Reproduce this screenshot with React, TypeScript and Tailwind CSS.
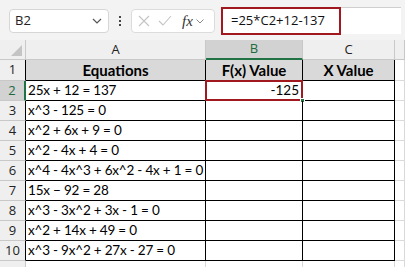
import React from "react";

const rows = [
  "25x + 12 = 137",
  "x^3 - 125 = 0",
  "x^2 + 6x + 9 = 0",
  "x^2 - 4x + 4 = 0",
  "x^4 - 4x^3 + 6x^2 - 4x + 1 = 0",
  "15x \u2212 92 = 28",
  "x^3 - 3x^2 + 3x - 1 = 0",
  "x^2 + 14x + 49 = 0",
  "x^3 - 9x^2 + 27x - 27 = 0",
];

const cellFont = { fontFamily: "Lato, 'Liberation Sans', sans-serif" };

export default function App() {
  return (
    <div className="w-[405px] h-[267px] overflow-hidden bg-white flex flex-col" style={{ fontFamily: "'Open Sans', 'Noto Sans', sans-serif" }}>
      {/* toolbar */}
      <div className="h-[40px] bg-[#f3f3f3] flex items-start pt-[9px] shrink-0">
        <div className="shrink-0 ml-[9px] w-[100px] h-[24px] rounded-[4px] border border-[#d6d6d6] bg-white flex items-center justify-between pl-[5px] pr-[6px]">
          <span className="text-[13px] text-[#222]">B2</span>
          <svg width="10" height="6" viewBox="0 0 10 6"><path d="M1 1 L5 5 L9 1" fill="none" stroke="#555" strokeWidth="1.2" /></svg>
        </div>
        <div className="shrink-0 w-[22px] h-[24px] flex flex-col items-center justify-center gap-[2px]">
          <div className="w-[2px] h-[2px] bg-[#444]" />
          <div className="w-[2px] h-[2px] bg-[#444]" />
          <div className="w-[2px] h-[2px] bg-[#444]" />
        </div>
        <div className="shrink-0 w-[84px] h-[24px] rounded-[4px] border border-[#dcdcdc] bg-white flex items-center pl-[6px] gap-[8px]">
          <svg width="12" height="12" viewBox="0 0 12 12" className="shrink-0"><path d="M1 1 L11 11 M11 1 L1 11" stroke="#c4c4c4" strokeWidth="1.1" /></svg>
          <svg width="14" height="12" viewBox="0 0 14 12" className="shrink-0"><path d="M1 6 L5 10 L13 1" fill="none" stroke="#c4c4c4" strokeWidth="1.1" /></svg>
          <span className="italic text-[15px] text-[#333] leading-none ml-[2px]" style={{ fontFamily: "'Liberation Serif', serif" }}>fx</span>
          <svg width="8" height="5" viewBox="0 0 8 5" className="-ml-[5px] shrink-0"><path d="M0.5 0.5 L4 4 L7.5 0.5" fill="none" stroke="#888" strokeWidth="1" /></svg>
        </div>
        <div className="shrink-0 ml-[6px] mt-[-2px] w-[180px] h-[27px] border-t border-l border-[#cfcfcf] bg-white flex items-stretch">
          <div className="shrink-0 w-[120px] -ml-[1px] -mt-[1px] h-[28px] border-2 border-[#a1191e] flex items-center pl-[8px] text-[13px] text-[#111] whitespace-nowrap">
            =25*C2+12-137
          </div>
        </div>
      </div>

      {/* sheet */}
      <div className="grid grid-cols-[26px_180px_97px_92px_10px] grid-rows-[20px_21px_repeat(10,20px)] text-[#000]">
        {/* column headers */}
        <div className="bg-[#efefef] border-r border-b border-[#c8c8c8] relative">
          <div className="absolute right-[3px] bottom-[3px] w-0 h-0 border-l-[11px] border-l-transparent border-b-[11px] border-b-[#c4c4c4]" />
        </div>
        <div className="bg-[#efefef] border-r border-b border-[#c8c8c8] flex items-center justify-center text-[13px] text-[#222]">A</div>
        <div className="bg-[#d2d2d2] border-r border-[#c8c8c8] border-b-2 border-b-[#217346] flex items-center justify-center text-[13px] text-[#1e6b40]">B</div>
        <div className="bg-[#efefef] border-r border-b border-[#c8c8c8] flex items-center justify-center text-[13px] text-[#222]">C</div>
        <div className="bg-[#efefef] border-r border-b border-[#c8c8c8]" />

        {/* row 1 */}
        <div className="bg-[#efefef] border-r border-r-[#000] border-b border-b-[#c8c8c8] flex items-center justify-center text-[13px] text-[#222]">1</div>
        <div className="bg-[#d9d9d9] border-r border-b border-black flex items-center justify-center text-[15px] font-bold" style={cellFont}>Equations</div>
        <div className="bg-[#d9d9d9] border-r border-b border-black flex items-center justify-center text-[15px] font-bold" style={cellFont}>F(x) Value</div>
        <div className="bg-[#d9d9d9] border-r border-b border-black flex items-center justify-center text-[15px] font-bold" style={cellFont}>X Value</div>
        <div className="border-r border-b border-[#d9d9d9]" />

        {rows.map((eq, i) => {
          const n = i + 2;
          const sel = n === 2;
          return (
            <React.Fragment key={n}>
              <div className={`${sel ? "bg-[#d2d2d2] text-[#1e6b40] border-r-2 border-r-[#217346]" : "bg-[#efefef] text-[#222] border-r border-r-black"} border-b border-b-[#c8c8c8] flex items-center justify-center text-[13px]`}>{n}</div>
              <div className="border-r border-b border-black flex items-center pl-[2px] text-[13.5px] tracking-[-0.2px] whitespace-nowrap" style={cellFont}>{eq}</div>
              <div className="border-r border-b border-black relative flex items-center justify-end pr-[3px] text-[13.5px]" style={cellFont}>
                {sel && (
                  <>
                    <div className="absolute -left-[1px] -top-[1px] -right-[1px] -bottom-[1px] border-2 border-[#a1191e]" />
                    <div className="absolute -right-[3px] -bottom-[3px] w-[5px] h-[5px] bg-[#217346] border border-white" />
                    <span className="relative">-125</span>
                  </>
                )}
              </div>
              <div className="border-r border-b border-black" />
              <div className="border-r border-b border-[#d9d9d9]" />
            </React.Fragment>
          );
        })}

        {/* row 11 partial */}
        <div className="bg-[#efefef] border-r border-[#c8c8c8]" />
        <div className="border-r border-[#d9d9d9]" />
        <div className="border-r border-[#d9d9d9]" />
        <div className="border-r border-[#d9d9d9]" />
        <div className="border-r border-[#d9d9d9]" />
      </div>
    </div>
  );
}
